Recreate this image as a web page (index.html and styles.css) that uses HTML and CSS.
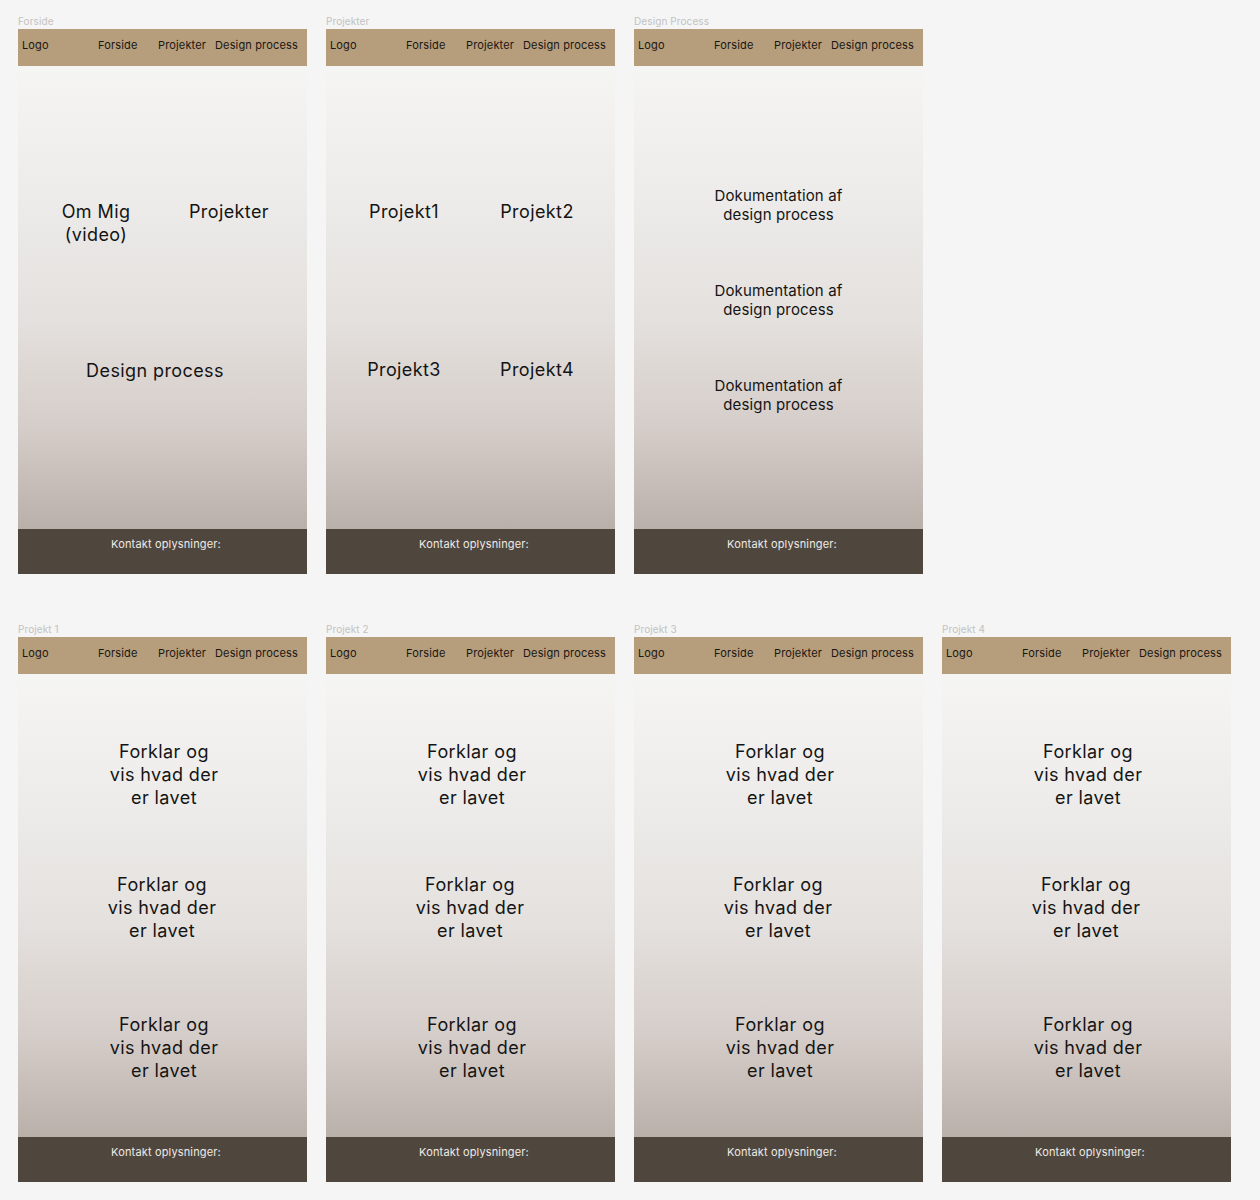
FILE: index.html
```html
<!DOCTYPE html>
<html lang="da">
<head>
<meta charset="utf-8">
<title>Wireframes</title>
<link rel="stylesheet" href="styles.css">
</head>
<body>
<main class="board">
  <section class="frame">
    <div class="label">Forside</div>
    <nav class="nav"><span>Logo</span><span>Forside</span><span>Projekter</span><span>Design process</span></nav>
    <div class="body home">
      <div class="pair">
        <div class="cell">Om Mig<br>(video)</div>
        <div class="cell">Projekter</div>
      </div>
      <div class="solo">Design process</div>
    </div>
    <footer class="foot">Kontakt oplysninger:</footer>
  </section>

  <section class="frame">
    <div class="label">Projekter</div>
    <nav class="nav"><span>Logo</span><span>Forside</span><span>Projekter</span><span>Design process</span></nav>
    <div class="body projects">
      <div class="pair">
        <div class="cell">Projekt1</div>
        <div class="cell">Projekt2</div>
      </div>
      <div class="pair second">
        <div class="cell">Projekt3</div>
        <div class="cell">Projekt4</div>
      </div>
    </div>
    <footer class="foot">Kontakt oplysninger:</footer>
  </section>

  <section class="frame">
    <div class="label">Design Process</div>
    <nav class="nav"><span>Logo</span><span>Forside</span><span>Projekter</span><span>Design process</span></nav>
    <div class="body docs">
      <p class="doc">Dokumentation af<br>design process</p>
      <p class="doc">Dokumentation af<br>design process</p>
      <p class="doc">Dokumentation af<br>design process</p>
    </div>
    <footer class="foot">Kontakt oplysninger:</footer>
  </section>

  <div class="empty"></div>

  <section class="frame">
    <div class="label">Projekt 1</div>
    <nav class="nav"><span>Logo</span><span>Forside</span><span>Projekter</span><span>Design process</span></nav>
    <div class="body detail">
      <p class="explain">Forklar og<br>vis hvad der<br>er lavet</p>
      <p class="explain mid">Forklar og<br>vis hvad der<br>er lavet</p>
      <p class="explain last">Forklar og<br>vis hvad der<br>er lavet</p>
    </div>
    <footer class="foot">Kontakt oplysninger:</footer>
  </section>

  <section class="frame">
    <div class="label">Projekt 2</div>
    <nav class="nav"><span>Logo</span><span>Forside</span><span>Projekter</span><span>Design process</span></nav>
    <div class="body detail">
      <p class="explain">Forklar og<br>vis hvad der<br>er lavet</p>
      <p class="explain mid">Forklar og<br>vis hvad der<br>er lavet</p>
      <p class="explain last">Forklar og<br>vis hvad der<br>er lavet</p>
    </div>
    <footer class="foot">Kontakt oplysninger:</footer>
  </section>

  <section class="frame">
    <div class="label">Projekt 3</div>
    <nav class="nav"><span>Logo</span><span>Forside</span><span>Projekter</span><span>Design process</span></nav>
    <div class="body detail">
      <p class="explain">Forklar og<br>vis hvad der<br>er lavet</p>
      <p class="explain mid">Forklar og<br>vis hvad der<br>er lavet</p>
      <p class="explain last">Forklar og<br>vis hvad der<br>er lavet</p>
    </div>
    <footer class="foot">Kontakt oplysninger:</footer>
  </section>

  <section class="frame">
    <div class="label">Projekt 4</div>
    <nav class="nav"><span>Logo</span><span>Forside</span><span>Projekter</span><span>Design process</span></nav>
    <div class="body detail">
      <p class="explain">Forklar og<br>vis hvad der<br>er lavet</p>
      <p class="explain mid">Forklar og<br>vis hvad der<br>er lavet</p>
      <p class="explain last">Forklar og<br>vis hvad der<br>er lavet</p>
    </div>
    <footer class="foot">Kontakt oplysninger:</footer>
  </section>
</main>
</body>
</html>
```

FILE: styles.css
```css
* { box-sizing: border-box; }

html, body {
  margin: 0;
  padding: 0;
  background: #f5f5f5;
}

body {
  font-family: Inter, "Liberation Sans", Arial, sans-serif;
  color: #161616;
  width: 1260px;
  height: 1200px;
  overflow: hidden;
}

.board {
  display: grid;
  grid-template-columns: repeat(4, 289px);
  column-gap: 19px;
  row-gap: 48px;
  padding: 14px 0 0 18px;
}

.frame {
  display: flex;
  flex-direction: column;
}

.label {
  height: 15px;
  font-size: 10px;
  line-height: 15px;
  color: #c2c2c2;
  letter-spacing: 0.1px;
}

.nav {
  height: 37px;
  background: #b69e7d;
  display: grid;
  grid-template-columns: 76px 60px 57px auto;
  padding: 9px 0 0 4px;
  font-size: 11px;
  line-height: 14px;
  letter-spacing: 0.15px;
  color: #1a1612;
}

.body {
  height: 463px;
  background: linear-gradient(180deg,
    #f5f5f4 0%,
    #f3f2f1 8%,
    #ecebe9 30%,
    #e4e0dd 55%,
    #d5cdc9 78%,
    #bab0aa 100%);
  font-size: 18px;
  line-height: 23px;
  letter-spacing: 0.4px;
  color: #141414;
}

.pair {
  display: grid;
  grid-template-columns: 156px 110px;
  text-align: center;
}

.home { padding-top: 134px; }

.solo {
  width: 274px;
  text-align: center;
  margin-top: 113px;
}

.projects { padding-top: 134px; }

.projects .second { margin-top: 135px; }

.docs {
  padding-top: 120px;
  display: flex;
  flex-direction: column;
  gap: 57px;
}

.doc {
  margin: 0;
  font-size: 15px;
  line-height: 19px;
  letter-spacing: 0.15px;
  text-align: center;
}

.detail {
  padding-top: 66px;
}

.explain {
  margin: 0;
  width: 292px;
  text-align: center;
}

.explain.mid {
  width: 288px;
  margin-top: 64px;
}

.explain.last {
  margin-top: 71px;
}

.foot {
  height: 45px;
  background: #4f463d;
  color: #eeeae6;
  font-size: 11px;
  line-height: 14px;
  letter-spacing: 0.15px;
  padding: 8px 0 0 7px;
  text-align: center;
}
```
